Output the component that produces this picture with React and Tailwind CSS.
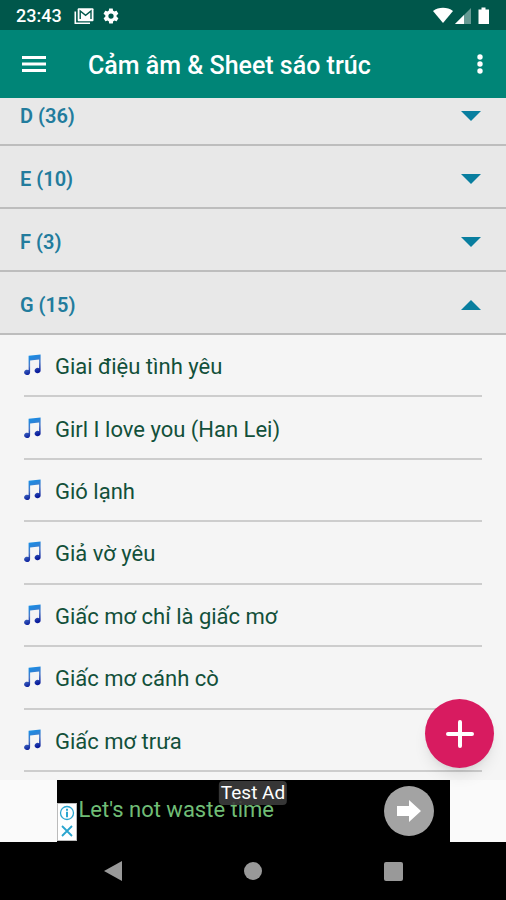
import React, { useState } from 'react';

const sections = [
  { letter: 'D', count: 36 },
  { letter: 'E', count: 10 },
  { letter: 'F', count: 3 },
  { letter: 'G', count: 15 },
];

const songs = [
  'Giai điệu tình yêu',
  'Girl I love you (Han Lei)',
  'Gió lạnh',
  'Giả vờ yêu',
  'Giấc mơ chỉ là giấc mơ',
  'Giấc mơ cánh cò',
  'Giấc mơ trưa',
];

const NoteIcon = () => (
  <svg viewBox="0 0 18 22" className="w-[18px] h-[22px] shrink-0" aria-hidden="true">
    <defs>
      <linearGradient id="note" x1="0" y1="0" x2="0.3" y2="1">
        <stop offset="0" stopColor="#169af0" />
        <stop offset="0.3" stopColor="#2386dc" />
        <stop offset="0.6" stopColor="#4a78c8" />
        <stop offset="1" stopColor="#0a1c9c" />
      </linearGradient>
    </defs>
    <path
      fill="url(#note)"
      d="M4.6 1.8 16.6.4V16.500a3 2.700 0 1 1-1.500-2.300V5.400L6.100 6.400v11.900a3 2.700 0 1 1-1.500-2.300z"
    />
  </svg>
);

const StatusBar = () => (
  <div className="h-[30px] shrink-0 bg-[#00574b] px-4 pt-[2px] flex items-center justify-between text-white">
    <div className="flex items-center">
      <span className="text-lg leading-5 font-medium">23:43</span>
      <svg viewBox="0 0 20 17" className="w-5 h-[17px] ml-3" aria-hidden="true">
        <path fill="none" stroke="#fff" strokeWidth="1.6" d="M1.3 3.5v11.8h14.7" />
        <rect x="3.700" y="0.300" width="15.800" height="13" rx="1" fill="#fff" />
        <path fill="none" stroke="#00574b" strokeWidth="1.400" d="M6.200 11V3l5.400 4.300L17 3v8" />
      </svg>
      <svg viewBox="0 0 24 24" className="w-[18px] h-[18px] ml-2" aria-hidden="true">
        <path
          fill="#fff"
          d="M19.4 13c0-.3.1-.6.1-1s0-.7-.1-1l2.1-1.6c.2-.2.2-.4.1-.6l-2-3.5c-.1-.2-.4-.3-.6-.2l-2.5 1c-.5-.4-1.100-.7-1.700-1l-.4-2.600c0-.2-.2-.4-.5-.4h-4c-.2 0-.5.2-.5.4l-.4 2.600c-.6.3-1.200.6-1.700 1l-2.500-1c-.2-.1-.5 0-.6.2l-2 3.500c-.1.2-.1.4.1.6L4.500 11c0 .3-.1.6-.1 1s0 .7.1 1l-2.100 1.600c-.2.2-.2.4-.1.6l2 3.500c.1.2.4.3.6.2l2.500-1c.5.4 1.100.7 1.700 1l.4 2.600c0 .2.2.4.5.4h4c.2 0 .5-.2.5-.4l.4-2.600c.6-.3 1.200-.6 1.700-1l2.500 1c.2.1.5 0 .6-.2l2-3.500c.1-.2.1-.4-.1-.6zM12 15.500a3.500 3.500 0 1 1 0-7 3.500 3.500 0 0 1 0 7z"
        />
      </svg>
    </div>
    <svg viewBox="0 0 58 18" className="w-[58px] h-[18px]" aria-hidden="true">
      <path fill="#fff" d="M1 4C6.500-.2 15.500-.2 21 4L11 16z" />
      <path fill="#fff" fillOpacity="0.4" d="M39 1v16H23z" />
      <path fill="#fff" d="M32 8v9h-9z" />
      <path fill="#fff" d="M46.500 2.500h3V.6h4v1.900H57V17H46.500z" />
    </svg>
  </div>
);

const AppBar = () => (
  <header className="h-[68px] shrink-0 bg-[#008577] text-white flex items-center pl-5 pr-3 relative z-10">
    <button type="button" aria-label="Menu" className="w-7 h-8 flex items-center justify-center">
      <svg viewBox="0 0 24 18" className="w-6 h-[18px]" aria-hidden="true">
        <path fill="#fff" d="M0 1h24v3H0zM0 7.500h24v3H0zM0 14h24v3H0z" />
      </svg>
    </button>
    <h1 className="flex-1 pl-10 pt-1 text-[25px] leading-8 font-medium whitespace-nowrap">Cảm âm & Sheet sáo trúc</h1>
    <button type="button" aria-label="More options" className="w-7 h-8 flex items-center justify-center">
      <svg viewBox="0 0 6 20" className="w-[6px] h-5" aria-hidden="true">
        <circle cx="3" cy="3" r="2.700" fill="#fff" />
        <circle cx="3" cy="10" r="2.700" fill="#fff" />
        <circle cx="3" cy="17" r="2.700" fill="#fff" />
      </svg>
    </button>
  </header>
);

const SectionRow = ({ letter, count, isOpen, onToggle }) => (
  <button
    type="button"
    onClick={onToggle}
    aria-expanded={isOpen}
    className="w-full h-[63px] shrink-0 px-5 pt-1 flex items-center justify-between bg-[#e8e8e8] border-b-2 border-[#bdbdbd] text-[#227c9d] text-[20px] font-semibold"
  >
    <span>{letter} ({count})</span>
    <svg viewBox="0 0 20 10" className="w-5 h-[10px] mr-[5px]" aria-hidden="true">
      <path fill="#087e9f" d={isOpen ? 'M0 10 10 0l10 10z' : 'M0 0h20L10 10z'} />
    </svg>
  </button>
);

const AdBanner = () => (
  <div className="shrink-0 bg-[#fafafa] flex justify-center">
    <div className="w-[393px] h-[62px] bg-black relative flex items-start justify-between">
      <div className="w-5 h-[38px] mt-[23px] bg-white border border-[#bbb] flex flex-col items-center justify-around">
        <svg viewBox="0 0 16 16" className="w-4 h-4" aria-hidden="true">
          <circle cx="8" cy="8" r="6.500" fill="none" stroke="#2aa5cf" strokeWidth="1.300" />
          <path fill="#2aa5cf" d="M7 3.800h2v2H7zM7 6.800h2v5.500H7z" />
        </svg>
        <svg viewBox="0 0 16 16" className="w-4 h-4" aria-hidden="true">
          <path stroke="#2aa5cf" strokeWidth="1.800" d="m3 3 10 10M13 3 3 13" />
        </svg>
      </div>
      <p className="flex-1 pl-[2px] pt-4 text-[22px] leading-7 text-[#70bd76]">Let's not waste time</p>
      <a href="#ad" aria-label="Open" className="w-[50px] h-[50px] mt-[6px] mr-4 rounded-full bg-[#a3a3a3] flex items-center justify-center">
        <svg viewBox="0 0 26 22" className="w-[26px] h-[22px]" aria-hidden="true">
          <path fill="#fff" d="M1 6h12V0l12 11-12 11v-6H1z" />
        </svg>
      </a>
      <span className="absolute top-px left-1/2 -translate-x-1/2 px-[2px] rounded-sm bg-[#3c3c3c]/90 text-white text-[19px] leading-6 whitespace-nowrap">
        Test Ad
      </span>
    </div>
  </div>
);

const NavBar = () => (
  <nav className="h-[58px] shrink-0 bg-black flex items-center justify-center gap-[110px]">
    <button type="button" aria-label="Back" className="w-[30px] h-8 flex items-center justify-center">
      <svg viewBox="0 0 18 20" className="w-[18px] h-5" aria-hidden="true">
        <path fill="#999" d="M18 0v20L0 10z" />
      </svg>
    </button>
    <button type="button" aria-label="Home" className="w-[30px] h-8 flex items-center justify-center">
      <span className="w-[18px] h-[18px] rounded-full bg-[#999]" />
    </button>
    <button type="button" aria-label="Recent apps" className="w-[30px] h-8 flex items-center justify-center">
      <span className="w-[19px] h-[19px] rounded-[2px] bg-[#999]" />
    </button>
  </nav>
);

const App = () => {
  const [open, setOpen] = useState('G');

  return (
    <div className="h-screen flex flex-col overflow-hidden bg-[#f5f5f5] font-['Roboto',sans-serif]">
      <StatusBar />
      <AppBar />
      <main className="flex-1 min-h-0 flex flex-col relative">
        <div className="flex-1 flex flex-col -mt-[15px] pb-2">
          {sections.map((section) => (
            <SectionRow
              key={section.letter}
              {...section}
              isOpen={open === section.letter}
              onToggle={() => setOpen(open === section.letter ? null : section.letter)}
            />
          ))}
          {open === 'G' && (
            <ul className="flex-1 flex flex-col mx-6">
              {songs.map((song) => (
                <li key={song} className="flex-1 flex items-center gap-[13px] border-b-2 border-[#cdcdcd]">
                  <NoteIcon />
                  <span className="pt-1 text-[22px] leading-7 text-[#12503a]">{song}</span>
                </li>
              ))}
            </ul>
          )}
        </div>
        <button
          type="button"
          aria-label="Add song"
          className="absolute right-3 bottom-3 w-[69px] h-[69px] rounded-full bg-[#d81b60] shadow-lg flex items-center justify-center"
        >
          <svg viewBox="0 0 28 28" className="w-7 h-7" aria-hidden="true">
            <path stroke="#fff" strokeWidth="4" strokeLinecap="round" d="M14 2v24M2 14h24" />
          </svg>
        </button>
      </main>
      <AdBanner />
      <NavBar />
    </div>
  );
};

export default App;
